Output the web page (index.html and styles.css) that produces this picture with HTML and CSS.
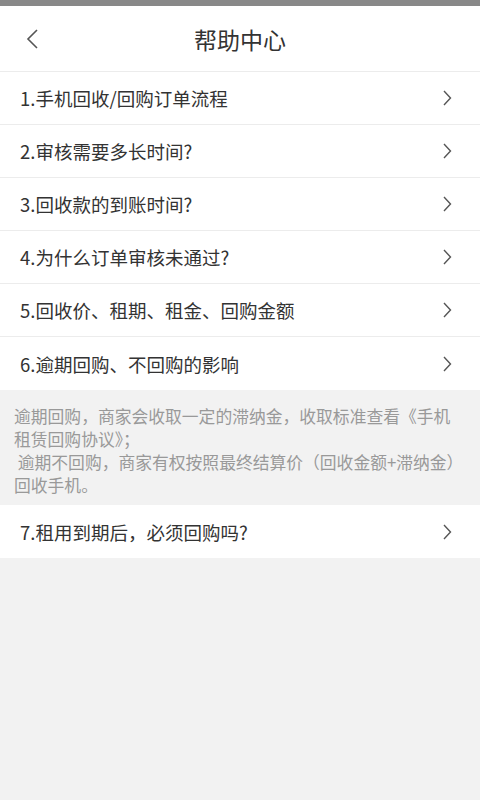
FILE: index.html
```html
<!DOCTYPE html>
<html lang="zh">
<head>
<meta charset="utf-8">
<link rel="stylesheet" href="styles.css">
</head>
<body>
<div class="status"></div>
<header class="nav">
  <svg class="back" width="14" height="22" viewBox="0 0 14 22"><path d="M11 2 L2 11 L11 20" fill="none" stroke="#555" stroke-width="1.6"/></svg>
  <div class="title">帮助中心</div>
</header>
<ul class="list">
  <li class="row"><span>1.手机回收/回购订单流程</span><svg class="chev" width="10" height="16" viewBox="0 0 10 16"><path d="M2 1 L8.5 8 L2 15" fill="none" stroke="#555" stroke-width="1.4"/></svg></li>
  <li class="row"><span>2.审核需要多长时间?</span><svg class="chev" width="10" height="16" viewBox="0 0 10 16"><path d="M2 1 L8.5 8 L2 15" fill="none" stroke="#555" stroke-width="1.4"/></svg></li>
  <li class="row"><span>3.回收款的到账时间?</span><svg class="chev" width="10" height="16" viewBox="0 0 10 16"><path d="M2 1 L8.5 8 L2 15" fill="none" stroke="#555" stroke-width="1.4"/></svg></li>
  <li class="row"><span>4.为什么订单审核未通过?</span><svg class="chev" width="10" height="16" viewBox="0 0 10 16"><path d="M2 1 L8.5 8 L2 15" fill="none" stroke="#555" stroke-width="1.4"/></svg></li>
  <li class="row"><span>5.回收价、租期、租金、回购金额</span><svg class="chev" width="10" height="16" viewBox="0 0 10 16"><path d="M2 1 L8.5 8 L2 15" fill="none" stroke="#555" stroke-width="1.4"/></svg></li>
  <li class="row last"><span>6.逾期回购、不回购的影响</span><svg class="chev" width="10" height="16" viewBox="0 0 10 16"><path d="M2 1 L8.5 8 L2 15" fill="none" stroke="#555" stroke-width="1.4"/></svg></li>
</ul>
<div class="answer">逾期回购，商家会收取一定的滞纳金，收取标准查看《手机租赁回购协议》；<br>&nbsp;逾期不回购，商家有权按照最终结算价（回收金额+滞纳金）回收手机。</div>
<ul class="list">
  <li class="row last"><span>7.租用到期后，必须回购吗?</span><svg class="chev" width="10" height="16" viewBox="0 0 10 16"><path d="M2 1 L8.5 8 L2 15" fill="none" stroke="#555" stroke-width="1.4"/></svg></li>
</ul>
</body>
</html>
```

FILE: styles.css
```css
html, body {
  margin: 0;
  padding: 0;
  background: #f2f2f2;
  font-family: "Noto Sans CJK SC", "Noto Sans", sans-serif;
  color: #333;
}
body { min-height: 800px; }
.status {
  height: 6px;
  background: #888;
}
.nav {
  position: relative;
  height: 65px;
  background: #fff;
  display: flex;
  align-items: center;
  justify-content: center;
  border-bottom: 1px solid #ececec;
}
.back {
  position: absolute;
  left: 26px;
  top: 22px;
}
.title {
  font-size: 23px;
  color: #333;
}
.list {
  list-style: none;
  margin: 0;
  padding: 0;
  background: #fff;
}
.row {
  height: 52px;
  display: flex;
  align-items: center;
  justify-content: space-between;
  padding: 0 28px 0 20px;
  border-bottom: 1px solid #ececec;
  font-size: 18.5px;
  color: #333;
}
.row.last { border-bottom: none; height: 53px; }
.answer {
  padding: 15px 22px 8px 14px;
  font-size: 16.8px;
  line-height: 23px;
  color: #999;
  background: #f2f2f2;
}
```
